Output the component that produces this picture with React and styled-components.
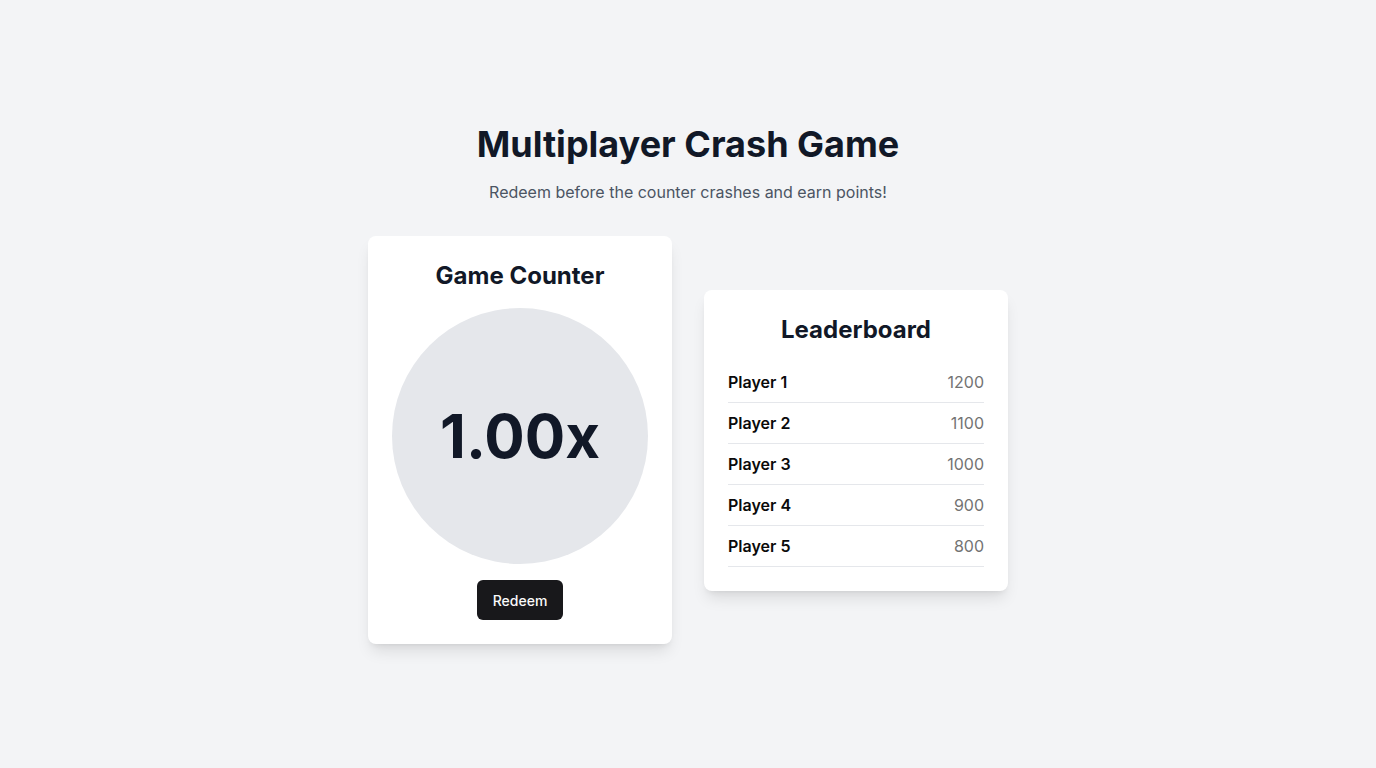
import React from "react";
import styled, { createGlobalStyle } from "styled-components";

const GlobalStyle = createGlobalStyle`
  * { box-sizing: border-box; }
  html, body { margin: 0; padding: 0; }
  body {
    font-family: Inter, "Noto Sans", sans-serif;
    background: #f3f4f6;
    color: #111827;
  }
`;

const Page = styled.main`
  min-height: 100vh;
  display: flex;
  flex-direction: column;
  align-items: center;
  justify-content: center;
  padding: 16px;
`;

const Title = styled.h1`
  margin: 0 0 16px;
  font-size: 36px;
  line-height: 40px;
  font-weight: 700;
  color: #111827;
`;

const Subtitle = styled.p`
  margin: 0 0 32px;
  font-size: 16px;
  line-height: 24px;
  color: #4b5563;
`;

const Row = styled.div`
  display: flex;
  align-items: center;
  gap: 32px;
`;

const Card = styled.section`
  width: 304px;
  background: #ffffff;
  border-radius: 8px;
  padding: 24px;
  box-shadow: 0 10px 15px -3px rgba(0, 0, 0, 0.1), 0 4px 6px -4px rgba(0, 0, 0, 0.1);
  display: flex;
  flex-direction: column;
  align-items: ${(p) => (p.$stretch ? "stretch" : "center")};
`;

const CardTitle = styled.h2`
  margin: 0 0 16px;
  font-size: 24px;
  line-height: 32px;
  font-weight: 700;
  text-align: center;
  color: #111827;
`;

const Circle = styled.div`
  width: 256px;
  height: 256px;
  border-radius: 50%;
  background: #e5e7eb;
  display: flex;
  align-items: center;
  justify-content: center;
  margin-bottom: 16px;
`;

const Multiplier = styled.span`
  font-size: 60px;
  line-height: 1;
  font-weight: 700;
  color: #111827;
`;

const Button = styled.button`
  height: 40px;
  padding: 0 16px;
  border: none;
  border-radius: 6px;
  background: #18181b;
  color: #fafafa;
  font-family: inherit;
  font-size: 14px;
  font-weight: 500;
  cursor: pointer;
`;

const List = styled.ul`
  list-style: none;
  margin: 0;
  padding: 0;
`;

const Item = styled.li`
  display: flex;
  justify-content: space-between;
  align-items: center;
  padding: 8px 0;
  border-bottom: 1px solid #e5e7eb;
  font-size: 16px;
  line-height: 24px;
`;

const Name = styled.span`
  font-weight: 600;
  color: #0a0a0a;
`;

const Score = styled.span`
  color: #737373;
`;

const players = [
  { name: "Player 1", score: 1200 },
  { name: "Player 2", score: 1100 },
  { name: "Player 3", score: 1000 },
  { name: "Player 4", score: 900 },
  { name: "Player 5", score: 800 },
];

export default function App() {
  return (
    <>
      <GlobalStyle />
      <Page>
        <Title>Multiplayer Crash Game</Title>
        <Subtitle>Redeem before the counter crashes and earn points!</Subtitle>
        <Row>
          <Card>
            <CardTitle>Game Counter</CardTitle>
            <Circle>
              <Multiplier>1.00x</Multiplier>
            </Circle>
            <Button>Redeem</Button>
          </Card>
          <Card $stretch>
            <CardTitle>Leaderboard</CardTitle>
            <List>
              {players.map((p) => (
                <Item key={p.name}>
                  <Name>{p.name}</Name>
                  <Score>{p.score}</Score>
                </Item>
              ))}
            </List>
          </Card>
        </Row>
      </Page>
    </>
  );
}
